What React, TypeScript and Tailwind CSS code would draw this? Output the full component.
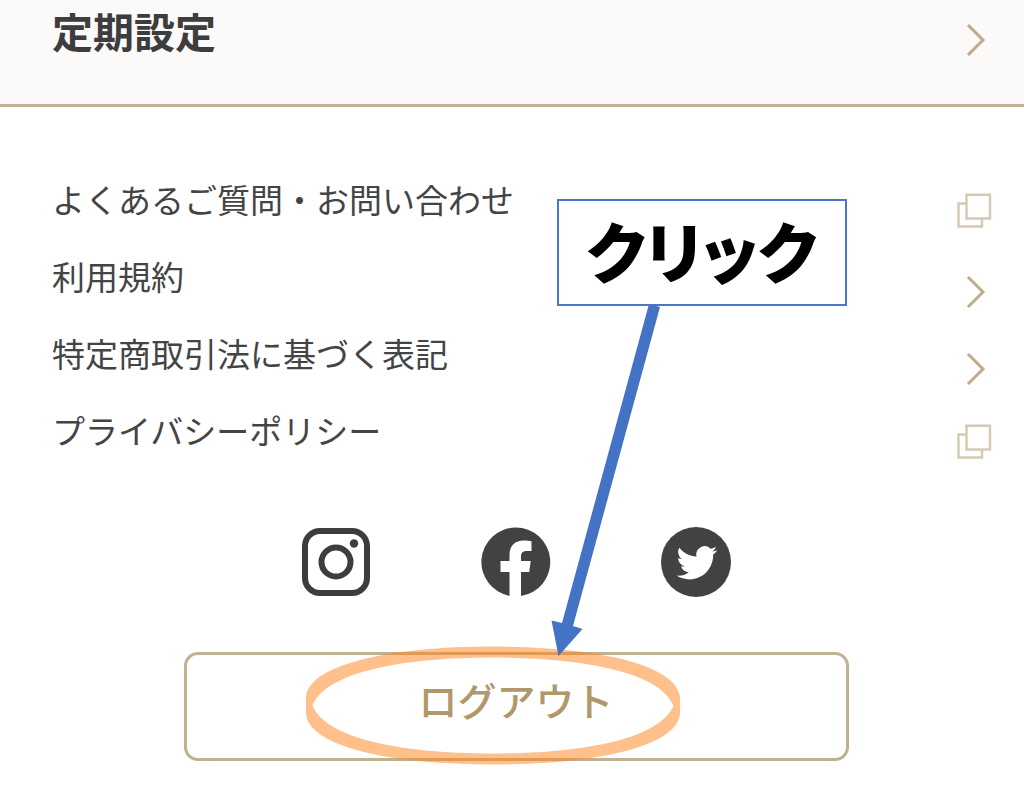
import type { ReactNode } from "react";

function Chevron() {
  return (
    <svg className="mr-1.5 h-8 w-5 shrink-0" viewBox="0 0 20 32" fill="none" stroke="#bfac8b" strokeWidth="3" aria-hidden="true">
      <path d="M2 1 17 16 2 31" />
    </svg>
  );
}

function NewWindow() {
  return (
    <svg className="h-9 w-9 shrink-0" viewBox="0 0 36 36" fill="none" stroke="#d6c9b1" strokeWidth="2.4" aria-hidden="true">
      <path d="M10.5 10.5H2.5V33.500H26V26" />
      <path d="M10.500 1.700H34V25.500H10.500Z" />
    </svg>
  );
}

function Instagram() {
  return (
    <svg className="h-full w-full" viewBox="0 0 72 72" fill="none" stroke="#3d3d3d" strokeWidth="6" aria-hidden="true">
      <rect x="5" y="5" width="62" height="62" rx="15" />
      <circle cx="36" cy="36" r="14.500" />
      <circle cx="54" cy="17.500" r="4.200" fill="#3d3d3d" stroke="none" />
    </svg>
  );
}

function Facebook() {
  return (
    <svg className="h-full w-full" viewBox="0 0 72 72" aria-hidden="true">
      <path
        fill="#424242"
        d="M35.500 1.500A34.500 34.500 0 0 0 29.500 69.900V46H20.500V35H29.500V29C29.500 19.500 35.200 14.500 43.700 14.500C46.700 14.500 49.500 14.800 51.500 15.200V25H46.700C42.500 25 41 27.200 41 30.300V35H50.700L49.200 46H41V70.100A34.500 34.500 0 0 0 35.500 1.500Z"
      />
    </svg>
  );
}

function Twitter() {
  return (
    <svg className="h-full w-full" viewBox="0 0 72 72" aria-hidden="true">
      <circle cx="36" cy="36" r="35" fill="#424242" />
      <path
        fill="#fff"
        transform="translate(16.500 16.400) scale(1.700)"
        d="M23.953 4.570a10 10 0 01-2.825.775 4.958 4.958 0 002.163-2.723c-.951.555-2.005.959-3.127 1.184a4.920 4.920 0 00-8.384 4.482C7.690 8.095 4.067 6.130 1.640 3.162a4.822 4.822 0 00-.666 2.475c0 1.710.870 3.213 2.188 4.096a4.904 4.904 0 01-2.228-.616v.060a4.923 4.923 0 003.946 4.827 4.996 4.996 0 01-2.212.085 4.936 4.936 0 004.604 3.417 9.867 9.867 0 01-6.102 2.105c-.390 0-.779-.023-1.170-.067a13.995 13.995 0 007.557 2.209c9.053 0 13.998-7.496 13.998-13.985 0-.210 0-.420-.015-.630A9.935 9.935 0 0024 4.590z"
      />
    </svg>
  );
}

const links = [
  { label: "よくあるご質問・お問い合わせ", external: true },
  { label: "利用規約", external: false },
  { label: "特定商取引法に基づく表記", external: false },
  { label: "プライバシーポリシー", external: true },
];

const socials: { name: string; icon: ReactNode }[] = [
  { name: "Instagram", icon: <Instagram /> },
  { name: "Facebook", icon: <Facebook /> },
  { name: "Twitter", icon: <Twitter /> },
];

export default function App() {
  return (
    <div className="min-h-screen overflow-x-hidden bg-white font-['Noto_Sans_CJK_JP',sans-serif] text-[#444444]">
      <header className="border-b-[3px] border-[#c1b193] bg-[#fbfaf8]">
        <a href="#subscription" className="flex items-start justify-between pt-1.5 pr-8 pb-12 pl-[52px]">
          <h1 className="text-[41px] leading-[48px] font-bold text-[#3d3d3d]">定期設定</h1>
          <span className="pt-[18px]">
            <Chevron />
          </span>
        </a>
      </header>

      <main className="pt-[68px] pb-11">
        <nav>
          <ul className="flex flex-col gap-[29px] pr-8 pl-[52px]">
            {links.map((link) => (
              <li key={link.label}>
                <a href="#info" className="flex h-12 items-start justify-between text-[33px] leading-[48px]">
                  {link.label}
                  <span className={link.external ? "pt-[18px]" : "pt-6"}>
                    {link.external ? <NewWindow /> : <Chevron />}
                  </span>
                </a>
              </li>
            ))}
          </ul>
        </nav>

        <div className="flex flex-col items-center pl-2">
          <ul className="mt-[72px] flex gap-[108px]">
            {socials.map((s) => (
              <li key={s.name}>
                <a href="#social" aria-label={s.name} className="block size-[72px]">
                  {s.icon}
                </a>
              </li>
            ))}
          </ul>

          <div className="relative mt-[54px] w-[665px]">
            <button
              type="button"
              className="flex w-full justify-center rounded-[14px] border-[3px] border-[#c1b193] pt-4 pb-[31px] text-[39px] leading-[56px] font-medium text-[#b0986a]"
            >
              ログアウト
            </button>

            <svg
              className="pointer-events-none absolute -top-1.5 left-[122px] h-[119px] w-[374px]"
              viewBox="0 0 374 119"
              aria-hidden="true"
            >
              <path
                fill="#ff8119"
                fillOpacity="0.500"
                fillRule="evenodd"
                d="M0 51C3 19 82 .5 187 .5S371 19 374 51V68C371 100 292 118.500 187 118.500S3 100 0 68ZM6.500 59.500C20 93 97 107.500 187 107.500S354 93 367.500 59.500C354 26 277 11.500 187 11.500S20 26 6.500 59.500Z"
              />
            </svg>

            <svg
              className="pointer-events-none absolute -top-[352px] left-[356px] h-[360px] w-[130px]"
              viewBox="0 0 130 360"
              fill="#4472c4"
              aria-hidden="true"
            >
              <path d="M109 4 120 7 33 326 42.500 329 18.500 356 11.500 320.500 22 323Z" />
            </svg>

            <div className="absolute -top-[453px] left-[373px] flex h-[107px] w-[290px] items-center justify-center border-2 border-[#4a78c7] bg-white pb-2 text-[66px] leading-none font-black text-black [font-feature-settings:'palt']">
              クリック
            </div>
          </div>
        </div>
      </main>
    </div>
  );
}
